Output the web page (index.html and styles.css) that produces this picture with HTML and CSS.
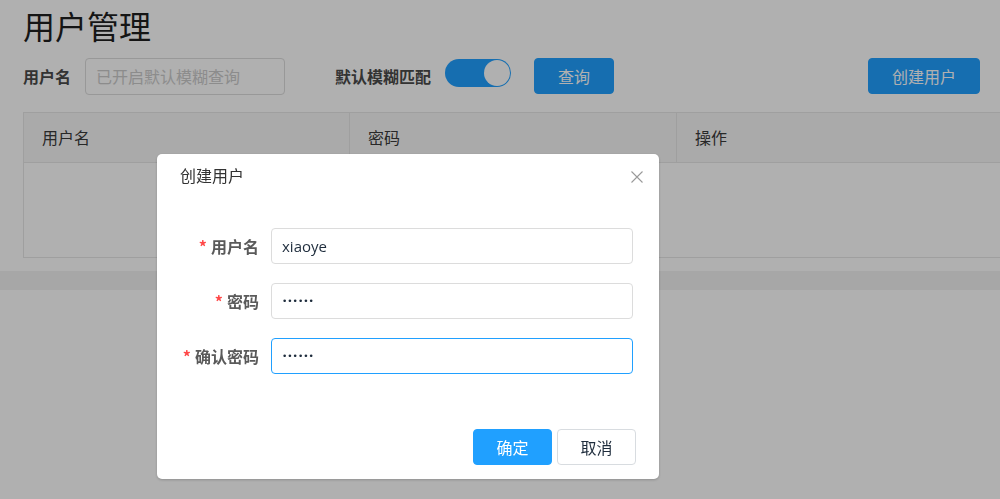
FILE: index.html
```html
<!DOCTYPE html>
<html lang="zh-CN">
<head>
<meta charset="utf-8">
<title>用户管理</title>
<link rel="stylesheet" href="styles.css">
</head>
<body>
<div class="page">
  <h1 class="title">用户管理</h1>
  <div class="toolbar">
    <span class="tb-label">用户名</span>
    <input class="tb-input" type="text" placeholder="已开启默认模糊查询">
    <span class="tb-label tb-label-fuzzy">默认模糊匹配</span>
    <span class="switch"><span class="switch-thumb"></span></span>
    <button class="btn btn-primary btn-query">查询</button>
    <span class="spacer"></span>
    <button class="btn btn-primary btn-create">创建用户</button>
  </div>
  <div class="table">
    <div class="thead">
      <div class="th">用户名</div>
      <div class="th">密码</div>
      <div class="th">操作</div>
    </div>
    <div class="tbody"></div>
  </div>
</div>
<div class="band"></div>

<div class="mask"></div>
<div class="dialog">
  <div class="dialog-header">
    <span class="dialog-title">创建用户</span>
    <svg class="dialog-close" width="12" height="12" viewBox="0 0 12 12"><path d="M0.5 0.5 L11.5 11.5 M11.5 0.5 L0.5 11.5" stroke="#9a9a9a" stroke-width="1.1" fill="none"/></svg>
  </div>
  <div class="dialog-body">
    <div class="form-item">
      <label class="form-label"><span class="req">*</span>用户名</label>
      <div class="form-input">xiaoye</div>
    </div>
    <div class="form-item">
      <label class="form-label"><span class="req">*</span>密码</label>
      <div class="form-input dots">••••••</div>
    </div>
    <div class="form-item">
      <label class="form-label"><span class="req">*</span>确认密码</label>
      <div class="form-input dots focus">••••••</div>
    </div>
  </div>
  <div class="dialog-footer">
    <button class="btn btn-primary btn-dlg">确定</button>
    <button class="btn btn-default btn-dlg">取消</button>
  </div>
</div>
</body>
</html>
```
FILE: styles.css
```css
html, body {
  margin: 0;
  padding: 0;
  background: #ffffff;
  overflow: hidden;
  font-family: "Noto Sans CJK SC", "Noto Sans", sans-serif;
  width: 1000px;
  height: 499px;
}
.page {
  padding: 0 20px 0 23px;
}
.title {
  margin: 0;
  padding-top: 2px;
  height: 50px;
  font-size: 32px;
  font-weight: 400;
  line-height: 46px;
  color: #1f1f1f;
}
.toolbar {
  margin-top: 6px;
  display: flex;
  align-items: center;
  height: 36px;
}
.tb-label {
  font-size: 16px;
  font-weight: 700;
  color: #4a4a4a;
  line-height: 36px;
}
.tb-input {
  box-sizing: border-box;
  margin-left: 14px;
  width: 200px;
  height: 37px;
  border: 1px solid #dcdcdc;
  border-radius: 4px;
  padding: 0 10px;
  font-size: 16px;
  font-family: inherit;
  background: #fff;
  outline: none;
}
.tb-input::placeholder {
  color: #cbcbcb;
}
.tb-label-fuzzy {
  margin-left: 50px;
}
.switch {
  margin-left: 14px;
  margin-top: -7px;
  width: 66px;
  height: 28px;
  border-radius: 14px;
  background: #20a0ff;
  display: flex;
  justify-content: flex-end;
  align-items: center;
  padding: 0 1px;
  box-sizing: border-box;
}
.switch-thumb {
  width: 26px;
  height: 26px;
  border-radius: 50%;
  background: #fff;
}
.btn {
  box-sizing: border-box;
  height: 36px;
  border-radius: 4px;
  font-family: inherit;
  font-size: 16px;
  border: 1px solid transparent;
  padding: 0;
  cursor: pointer;
}
.btn-primary {
  background: #20a0ff;
  border-color: #20a0ff;
  color: #fff;
}
.btn-default {
  background: #fff;
  border-color: #d8dce0;
  color: #1f2d3d;
}
.btn-query {
  margin-left: 23px;
  width: 80px;
}
.spacer {
  flex: 1;
}
.btn-create {
  width: 112px;
}
.table {
  margin-top: 18px;
  width: 981px;
  border: 1px solid #e6e6e6;
  box-sizing: border-box;
}
.thead {
  display: grid;
  grid-template-columns: 326px 327px 1fr;
  background: #f7f7f7;
  border-bottom: 1px solid #e6e6e6;
  height: 49px;
}
.th {
  padding-left: 18px;
  font-size: 16px;
  color: #3a3a3a;
  line-height: 48px;
  border-right: 1px solid #e6e6e6;
}
.th:last-child {
  border-right: none;
}
.tbody {
  height: 94px;
}
.band {
  margin-top: 13px;
  height: 19px;
  background: #f2f2f2;
}
.mask {
  position: fixed;
  inset: 0;
  background: rgba(0, 0, 0, 0.31);
}
.dialog {
  position: fixed;
  left: 157px;
  top: 154px;
  width: 502px;
  height: 325px;
  background: #fff;
  border-radius: 5px;
  box-sizing: border-box;
  box-shadow: 0 1px 3px rgba(0, 0, 0, 0.2);
}
.dialog-header {
  display: flex;
  justify-content: space-between;
  align-items: center;
  padding: 0 16px 0 23px;
  height: 42px;
  box-sizing: border-box;
}
.dialog-title {
  font-size: 16px;
  color: #333;
  line-height: 24px;
}
.dialog-close {
  display: block;
  margin-top: 4px;
}
.dialog-body {
  padding: 32px 26px 0 0;
  display: flex;
  flex-direction: column;
  gap: 19px;
}
.form-item {
  display: flex;
  align-items: center;
  height: 36px;
}
.form-label {
  text-align: right;
  padding-right: 12px;
  font-size: 16px;
  font-weight: 700;
  color: #5a5a5a;
  box-sizing: border-box;
  width: 114px;
}
.req {
  color: #ff4949;
  margin-right: 4px;
  font-weight: 700;
}
.form-input {
  flex: 1;
  box-sizing: border-box;
  height: 36px;
  border: 1px solid #dcdcdc;
  border-radius: 4px;
  padding: 0 10px;
  font-size: 15px;
  line-height: 34px;
  color: #1f2d3d;
  font-family: "Open Sans", "Noto Sans", sans-serif;
}
.form-input.dots {
  font-size: 9px;
  letter-spacing: 0;
  font-family: "DejaVu Sans", sans-serif;
}
.form-input.focus {
  border-color: #20a0ff;
}
.dialog-footer {
  display: flex;
  justify-content: flex-end;
  gap: 5px;
  padding: 55px 23px 0 0;
}
.btn-dlg {
  width: 79px;
  height: 36px;
  font-size: 16px;
}
```
